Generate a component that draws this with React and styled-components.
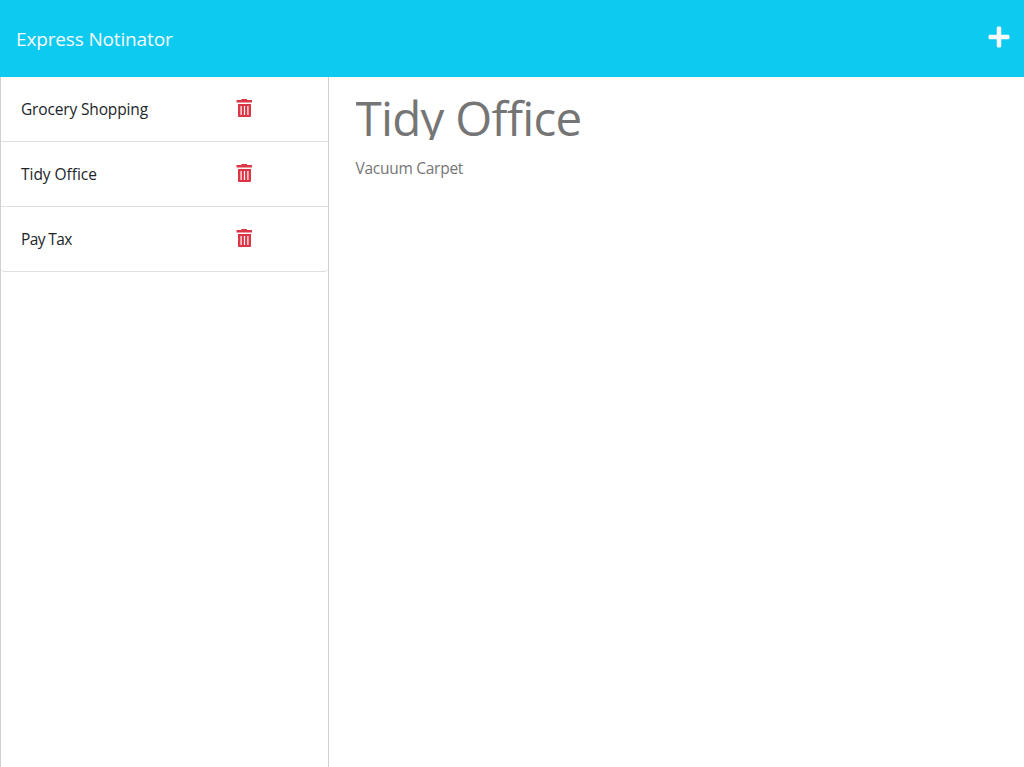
import React from "react";
import styled, { createGlobalStyle } from "styled-components";
import { FaPlus } from "react-icons/fa";

const GlobalStyle = createGlobalStyle`
  *, *::before, *::after { box-sizing: border-box; }
  body {
    margin: 0;
    background: #fff;
    color: #212529;
    font-family: "Segoe UI", "Open Sans", "Noto Sans", sans-serif;
    font-size: 15.5px;
    line-height: 24px;
  }
`;

const Page = styled.div`
  display: flex;
  flex-direction: column;
  height: 100vh;
  overflow: hidden;
`;

const Header = styled.header`
  display: flex;
  flex: none;
  align-items: center;
  justify-content: space-between;
  height: 77px;
  padding: 0 13.5px 0 16px;
  background: #0dcaf0;
  color: #f8f9fa;
`;

const Brand = styled.span`
  padding-top: 1px;
  font-size: 19px;
  letter-spacing: -0.15px;
`;

const AddButton = styled.button`
  display: flex;
  padding: 0;
  margin-bottom: 4px;
  border: 0;
  background: none;
  color: inherit;
  cursor: pointer;
`;

const Content = styled.div`
  display: flex;
  flex: 1;
`;

const Sidebar = styled.aside`
  flex: none;
  width: 329px;
  border: solid #d0d0d0;
  border-width: 0 1px;
`;

const NoteList = styled.ul`
  margin: 0;
  padding: 0;
  list-style: none;
`;

const NoteItem = styled.li`
  display: grid;
  grid-template-columns: 215px 1fr;
  align-items: center;
  height: 65px;
  padding-left: 20px;
  border-bottom: 1px solid #dfdfdf;

  &:last-child {
    border-radius: 0 0 4px 4px;
  }
`;

const NoteName = styled.span`
  padding-bottom: 1px;
  white-space: nowrap;
  letter-spacing: ${({ $tracking }) => $tracking};
`;

const DeleteButton = styled.button`
  display: flex;
  padding: 0 0 2px;
  border: 0;
  background: none;
  color: #dc3545;
  cursor: pointer;
`;

const Detail = styled.main`
  padding: 13px 26.5px;
  color: #757575;
`;

const Title = styled.h1`
  margin: 0;
  height: 50px;
  overflow: hidden;
  font-size: 47.5px;
  font-weight: 400;
  line-height: 56px;
  letter-spacing: -0.7px;
`;

const Body = styled.p`
  margin: 16px 0 0;
  letter-spacing: -0.27px;
`;

const TrashIcon = () => (
  <svg width="17" height="18" viewBox="0 0 17 18" fill="currentColor">
    <path d="M5.5 0h5.5v1h4.5a.5.5 0 0 1 .5.5V3.5H.5V1.5A.5.5 0 0 1 1 1h4.5z" />
    <path
      fillRule="evenodd"
      d="M2 5h13v12a1 1 0 0 1-1 1H3a1 1 0 0 1-1-1zM4.5 7v9h1.2V7zm3.4 0v9h1.2V7zm3.4 0v9h1.2V7z"
    />
  </svg>
);

const notes = [
  { name: "Grocery Shopping", tracking: "-0.15px" },
  { name: "Tidy Office", tracking: "-0.03px" },
  { name: "Pay Tax", tracking: "-0.6px" },
];

export default function App() {
  return (
    <Page>
      <GlobalStyle />
      <Header>
        <Brand>Express Notinator</Brand>
        <AddButton aria-label="Add note"><FaPlus size={24} /></AddButton>
      </Header>
      <Content>
        <Sidebar>
          <NoteList>
            {notes.map(({ name, tracking }) => (
              <NoteItem key={name}>
                <NoteName $tracking={tracking}>{name}</NoteName>
                <DeleteButton aria-label={`Delete ${name}`}><TrashIcon /></DeleteButton>
              </NoteItem>
            ))}
          </NoteList>
        </Sidebar>
        <Detail>
          <Title>Tidy Office</Title>
          <Body>Vacuum Carpet</Body>
        </Detail>
      </Content>
    </Page>
  );
}
